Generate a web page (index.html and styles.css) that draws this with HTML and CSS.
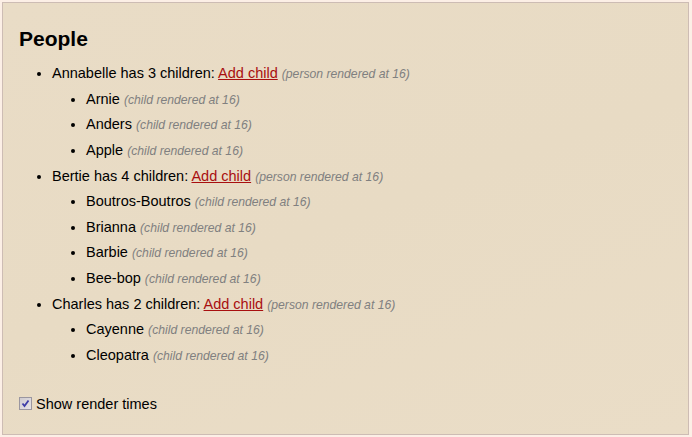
FILE: index.html
```html
<!DOCTYPE html>
<html>
<head>
<meta charset="utf-8">
<link rel="stylesheet" href="styles.css">
</head>
<body>
<div class="panel">
  <h2 class="title">People</h2>
  <ul class="people">
    <li class="person">Annabelle has 3 children: <a class="add" href="#">Add child</a> <span class="note">(person rendered at 16)</span>
      <ul class="children">
        <li class="child">Arnie <span class="note">(child rendered at 16)</span></li>
        <li class="child">Anders <span class="note">(child rendered at 16)</span></li>
        <li class="child">Apple <span class="note">(child rendered at 16)</span></li>
      </ul>
    </li>
    <li class="person">Bertie has 4 children: <a class="add" href="#">Add child</a> <span class="note">(person rendered at 16)</span>
      <ul class="children">
        <li class="child">Boutros-Boutros <span class="note">(child rendered at 16)</span></li>
        <li class="child">Brianna <span class="note">(child rendered at 16)</span></li>
        <li class="child">Barbie <span class="note">(child rendered at 16)</span></li>
        <li class="child">Bee-bop <span class="note">(child rendered at 16)</span></li>
      </ul>
    </li>
    <li class="person">Charles has 2 children: <a class="add" href="#">Add child</a> <span class="note">(person rendered at 16)</span>
      <ul class="children">
        <li class="child">Cayenne <span class="note">(child rendered at 16)</span></li>
        <li class="child">Cleopatra <span class="note">(child rendered at 16)</span></li>
      </ul>
    </li>
  </ul>
  <label class="toggle">
    <span class="check"><svg width="11" height="11" viewBox="0 0 11 11"><path d="M2.5 5.5 L4.5 8 L8.5 2.5" fill="none" stroke="#3c3ca8" stroke-width="1.8"/></svg></span>
    Show render times
  </label>
</div>
</body>
</html>
```
FILE: styles.css
```css
html, body {
  margin: 0;
  padding: 0;
  background: #fcefe6;
}
body {
  font-family: "Liberation Sans", Arial, sans-serif;
  font-size: 14.5px;
  color: #000;
}
.panel {
  margin: 2px 3px 2px 2px;
  height: 433px;
  box-sizing: border-box;
  border: 1px solid #cdbcb4;
  background: linear-gradient(160deg, #e9dcc6 0%, #e8dbc4 50%, #eaddc7 100%);
  padding: 24px 16px 0 16px;
}
.title {
  margin: 0;
  font-size: 21px;
  line-height: 24px;
  font-weight: bold;
}
.people {
  margin: 10px 0 0 0;
  padding-left: 33px;
  list-style: disc;
}
.children {
  margin: 0;
  padding-left: 34px;
  list-style: disc;
}
.person, .child {
  line-height: 25.64px;
}
.add {
  color: #a80f0f;
  text-decoration: underline;
}
.note {
  font-style: italic;
  font-size: 12.2px;
  line-height: 14px;
  color: #808080;
}
.toggle {
  display: flex;
  align-items: center;
  gap: 4px;
  margin-top: 26px;
  line-height: 18px;
}
.check {
  width: 11px;
  height: 11px;
  border: 1px solid #9a96a0;
  background: linear-gradient(135deg, #cfcbd0 0%, #e6e3e6 100%);
  display: inline-flex;
}
```
